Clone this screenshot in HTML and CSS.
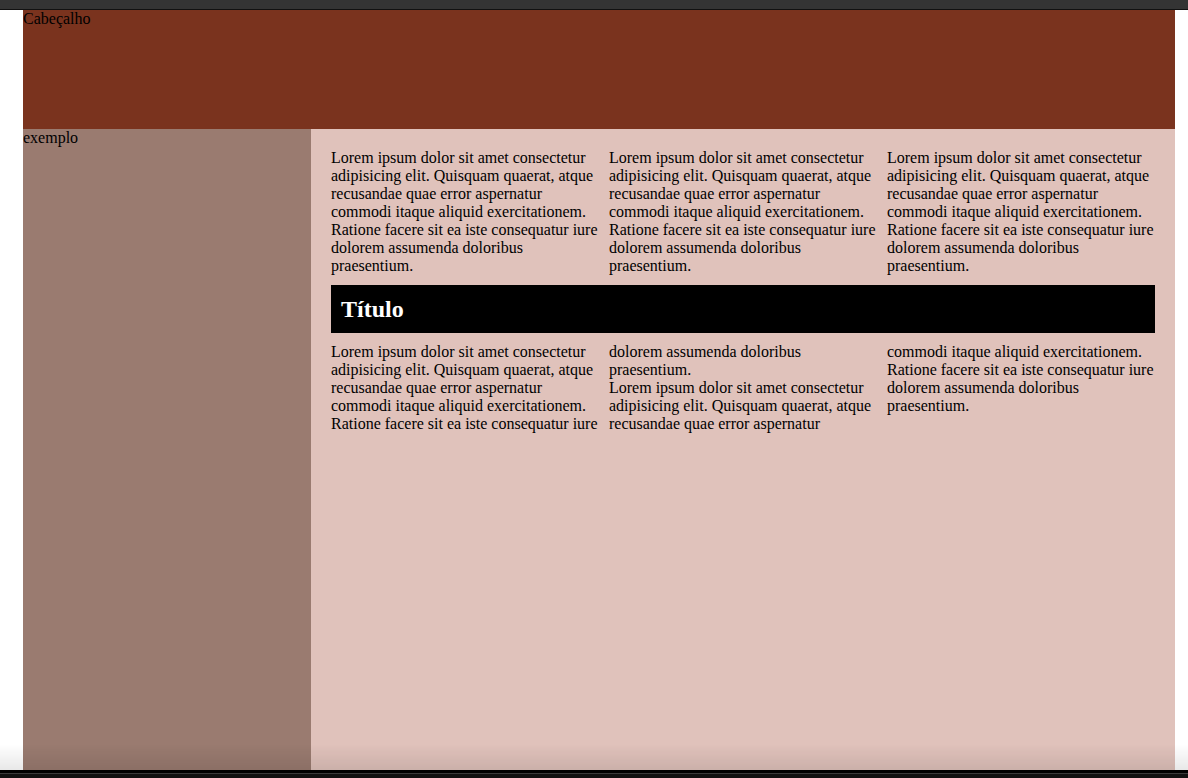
FILE: index.html
```html
<!DOCTYPE html>
<html lang="pt">
<head>
<meta charset="utf-8">
<title>Layout</title>
<link rel="stylesheet" href="styles.css">
</head>
<body>
<div class="chrome-top"></div>
<div class="page">
  <header class="header">Cabeçalho</header>
  <aside class="sidebar">exemplo</aside>
  <main class="main">
    <div class="cols3">
      <p>Lorem ipsum dolor sit amet consectetur adipisicing elit. Quisquam quaerat, atque recusandae quae error aspernatur commodi itaque aliquid exercitationem. Ratione facere sit ea iste consequatur iure dolorem assumenda doloribus praesentium.</p>
      <p>Lorem ipsum dolor sit amet consectetur adipisicing elit. Quisquam quaerat, atque recusandae quae error aspernatur commodi itaque aliquid exercitationem. Ratione facere sit ea iste consequatur iure dolorem assumenda doloribus praesentium.</p>
      <p>Lorem ipsum dolor sit amet consectetur adipisicing elit. Quisquam quaerat, atque recusandae quae error aspernatur commodi itaque aliquid exercitationem. Ratione facere sit ea iste consequatur iure dolorem assumenda doloribus praesentium.</p>
    </div>
    <h2 class="title">Título</h2>
    <div class="flow">
      <p>Lorem ipsum dolor sit amet consectetur adipisicing elit. Quisquam quaerat, atque recusandae quae error aspernatur commodi itaque aliquid exercitationem. Ratione facere sit ea iste consequatur iure dolorem assumenda doloribus praesentium.</p>
      <p>Lorem ipsum dolor sit amet consectetur adipisicing elit. Quisquam quaerat, atque recusandae quae error aspernatur commodi itaque aliquid exercitationem. Ratione facere sit ea iste consequatur iure dolorem assumenda doloribus praesentium.</p>
    </div>
  </main>
</div>
<div class="shade"></div>
<div class="chrome-bottom"></div>
</body>
</html>
```
FILE: styles.css
```css
html, body {
  margin: 0;
  padding: 0;
  background: #ffffff;
  overflow: hidden;
}
body {
  font-family: "Liberation Serif", "Times New Roman", serif;
  font-size: 16px;
  color: #000;
  height: 778px;
}
.chrome-top {
  height: 9px;
  background: #343434;
  border-bottom: 1px solid #111;
}
.page {
  margin-left: 23px;
  width: 1152px;
  height: 768px;
  display: grid;
  grid-template-columns: 288px 1fr;
  grid-template-rows: 119px 1fr;
}
.header {
  grid-column: 1 / -1;
  background: #7a331e;
}
.sidebar {
  background: #9a7b70;
}
.main {
  background: #e0c2bb;
  padding: 20px;
}
.main p {
  margin: 0;
}
.cols3 {
  display: grid;
  grid-template-columns: repeat(3, 1fr);
  gap: 10px;
}
.title {
  margin: 10px 0 10px;
  padding: 10px;
  background: #000;
  color: #fff;
  font-size: 24px;
  font-weight: bold;
  line-height: 28px;
}
.flow {
  column-count: 3;
  column-gap: 10px;
}
.shade {
  position: fixed;
  left: 0;
  right: 0;
  bottom: 8px;
  height: 26px;
  background: linear-gradient(to bottom, rgba(0,0,0,0), rgba(0,0,0,0.09));
  pointer-events: none;
}
.chrome-bottom {
  position: fixed;
  left: 0;
  right: 0;
  bottom: 0;
  height: 8px;
  background: #111;
  border-top: 3px solid #000;
  box-sizing: border-box;
}
.chrome-bottom::before {
  content: "";
  display: block;
  height: 1px;
  background: #3a3a3a;
}
```
